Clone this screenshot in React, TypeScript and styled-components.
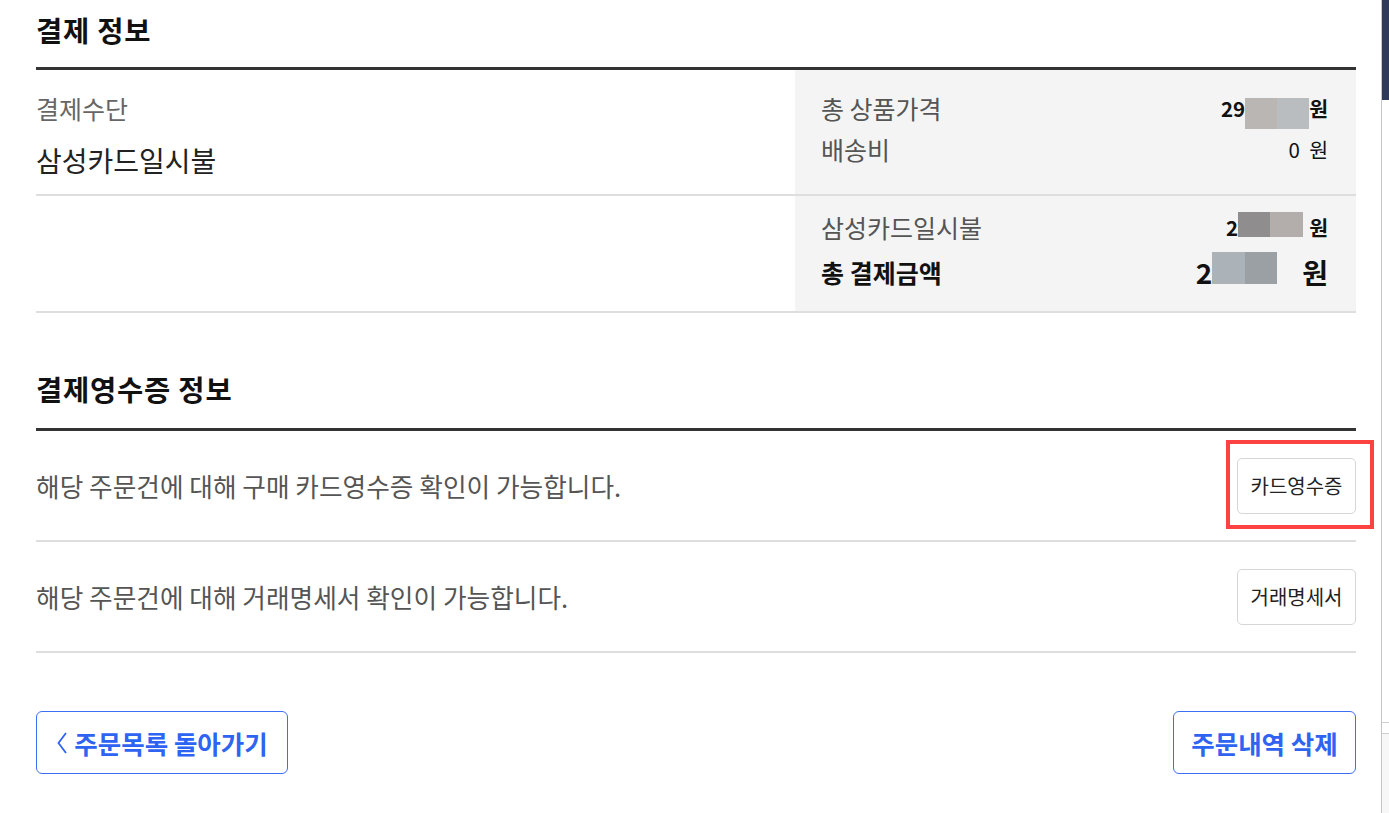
import React from "react";
import styled, { createGlobalStyle } from "styled-components";

const Global = createGlobalStyle`
  html, body { margin: 0; padding: 0; background: #fff; }
  body {
    font-family: "Noto Sans CJK KR", "Noto Sans", sans-serif;
    color: #222;
    overflow: hidden;
  }
  * { box-sizing: border-box; }
`;

const Page = styled.div`
  display: flex;
  width: 1389px;
  height: 813px;
`;

const Main = styled.main`
  width: 1381px;
  padding: 0 25px 0 36px;
`;

const SideStrip = styled.aside`
  width: 8px;
  height: 813px;
  border-left: 1px solid #c6c6c6;
  display: flex;
  flex-direction: column;
`;

const SideTop = styled.div`
  height: 100px;
  background: #2f3a5a;
`;

const SideFill = styled.div`
  flex: 1;
  border-bottom: 1px solid #cfcfcf;
`;

const SideBox = styled.div`
  margin-top: 10px;
  height: 80px;
  border-top: 1px solid #cfcfcf;
  background: #f7f7f7;
`;

const SectionTitle = styled.h2<{ $top: number; $bottom: number }>`
  margin: 0;
  padding: ${(p) => p.$top}px 0 ${(p) => p.$bottom}px;
  font-size: 28.5px;
  line-height: 38px;
  font-weight: 700;
  color: #111;
  letter-spacing: 0.8px;
  border-bottom: 3px solid #333;
`;

const PayRow = styled.div<{ $h: number }>`
  display: grid;
  grid-template-columns: 759px 1fr;
  height: ${(p) => p.$h}px;
  border-bottom: 2px solid #dedede;
`;

const LeftCell = styled.div`
  padding-top: 22px;
  display: flex;
  flex-direction: column;
`;

const MethodLabel = styled.div`
  font-size: 25px;
  line-height: 32px;
  color: #666;
`;

const MethodValue = styled.div`
  margin-top: 18px;
  font-size: 28px;
  line-height: 36px;
  color: #222;
`;

const SummaryCell = styled.div<{ $top: number }>`
  background: #f4f4f4;
  padding: ${(p) => p.$top}px 28px 0 26px;
  display: flex;
  flex-direction: column;
`;

const SumLine = styled.div<{ $big?: boolean; $gap: number }>`
  display: flex;
  justify-content: space-between;
  align-items: center;
  margin-top: ${(p) => p.$gap}px;
  height: ${(p) => (p.$big ? 36 : 32)}px;
`;

const SumLabel = styled.span<{ $strong?: boolean }>`
  font-size: 25px;
  font-weight: ${(p) => (p.$strong ? 700 : 400)};
  color: ${(p) => (p.$strong ? "#111" : "#555")};
`;

const SumValue = styled.span<{ $bold?: boolean; $big?: boolean }>`
  display: inline-flex;
  align-items: center;
  font-size: ${(p) => (p.$big ? 28 : 20.5)}px;
  font-weight: ${(p) => (p.$bold ? 700 : 400)};
  color: #111;
  white-space: pre;
`;

const Mosaic = styled.span<{ $w: number; $h: number; $dy: number; $mr: number; $a: string; $b: string }>`
  display: inline-block;
  position: relative;
  top: ${(p) => p.$dy}px;
  width: ${(p) => p.$w}px;
  height: ${(p) => p.$h}px;
  margin-right: ${(p) => p.$mr}px;
  background: linear-gradient(to right, ${(p) => p.$a} 50%, ${(p) => p.$b} 50%);
`;

const ReceiptRow = styled.div`
  display: flex;
  align-items: center;
  justify-content: space-between;
  height: 111px;
  border-bottom: 2px solid #dedede;
`;

const ReceiptText = styled.span`
  font-size: 25.7px;
  color: #555;
`;

const ButtonWrap = styled.div`
  position: relative;
`;

const Highlight = styled.div`
  position: absolute;
  left: -11px;
  right: -18px;
  top: -18px;
  bottom: -15px;
  border: 4px solid #fd4242;
  pointer-events: none;
`;

const SmallButton = styled.button`
  width: 119px;
  height: 56px;
  border: 1px solid #d6d6d6;
  border-radius: 5px;
  background: #fff;
  font-family: inherit;
  font-size: 20px;
  color: #222;
  padding: 0;
`;

const BottomBar = styled.div`
  display: flex;
  justify-content: space-between;
  margin-top: 58px;
`;

const OutlineButton = styled.button<{ $w: number }>`
  width: ${(p) => p.$w}px;
  height: 63px;
  border: 1px solid #3d6ff5;
  border-radius: 6px;
  background: #fff;
  color: #2f63f2;
  font-family: inherit;
  font-size: 25.5px;
  font-weight: 700;
  display: flex;
  align-items: center;
  justify-content: center;
  gap: 6px;
  padding: 0;
`;

export default function App() {
  return (
    <Page>
      <Global />
      <Main>
        <SectionTitle $top={11} $bottom={18}>결제 정보</SectionTitle>
        <PayRow $h={126}>
          <LeftCell>
            <MethodLabel>결제수단</MethodLabel>
            <MethodValue>삼성카드일시불</MethodValue>
          </LeftCell>
          <SummaryCell $top={22}>
            <SumLine $gap={0}>
              <SumLabel>총 상품가격</SumLabel>
              <SumValue $bold>
                29
                <Mosaic $w={64} $h={31} $dy={5} $mr={0} $a="#bab6b3" $b="#b9bdc0" />
                원
              </SumValue>
            </SumLine>
            <SumLine $gap={9}>
              <SumLabel>배송비</SumLabel>
              <SumValue>0  원</SumValue>
            </SumLine>
          </SummaryCell>
        </PayRow>
        <PayRow $h={117}>
          <LeftCell />
          <SummaryCell $top={15}>
            <SumLine $gap={0}>
              <SumLabel>삼성카드일시불</SumLabel>
              <SumValue $bold>
                2
                <Mosaic $w={65} $h={25} $dy={-3} $mr={6} $a="#8f8d8e" $b="#b3aeab" />
                원
              </SumValue>
            </SumLine>
            <SumLine $big $gap={11}>
              <SumLabel $strong>총 결제금액</SumLabel>
              <SumValue $bold $big>
                2
                <Mosaic $w={65} $h={32} $dy={-4} $mr={25} $a="#abb3b8" $b="#9aa0a3" />
                원
              </SumValue>
            </SumLine>
          </SummaryCell>
        </PayRow>

        <SectionTitle $top={57} $bottom={20}>결제영수증 정보</SectionTitle>
        <ReceiptRow>
          <ReceiptText>해당 주문건에 대해 구매 카드영수증 확인이 가능합니다.</ReceiptText>
          <ButtonWrap>
            <SmallButton>카드영수증</SmallButton>
            <Highlight />
          </ButtonWrap>
        </ReceiptRow>
        <ReceiptRow>
          <ReceiptText>해당 주문건에 대해 거래명세서 확인이 가능합니다.</ReceiptText>
          <ButtonWrap>
            <SmallButton>거래명세서</SmallButton>
          </ButtonWrap>
        </ReceiptRow>

        <BottomBar>
          <OutlineButton $w={252}>
            <svg width="12" height="24" viewBox="0 0 12 24" fill="none">
              <path d="M10 2 L2.5 12 L10 22" stroke="#2f63f2" strokeWidth="1.8" />
            </svg>
            주문목록 돌아가기
          </OutlineButton>
          <OutlineButton $w={183}>주문내역 삭제</OutlineButton>
        </BottomBar>
      </Main>
      <SideStrip>
        <SideTop />
        <SideFill />
        <SideBox />
      </SideStrip>
    </Page>
  );
}
